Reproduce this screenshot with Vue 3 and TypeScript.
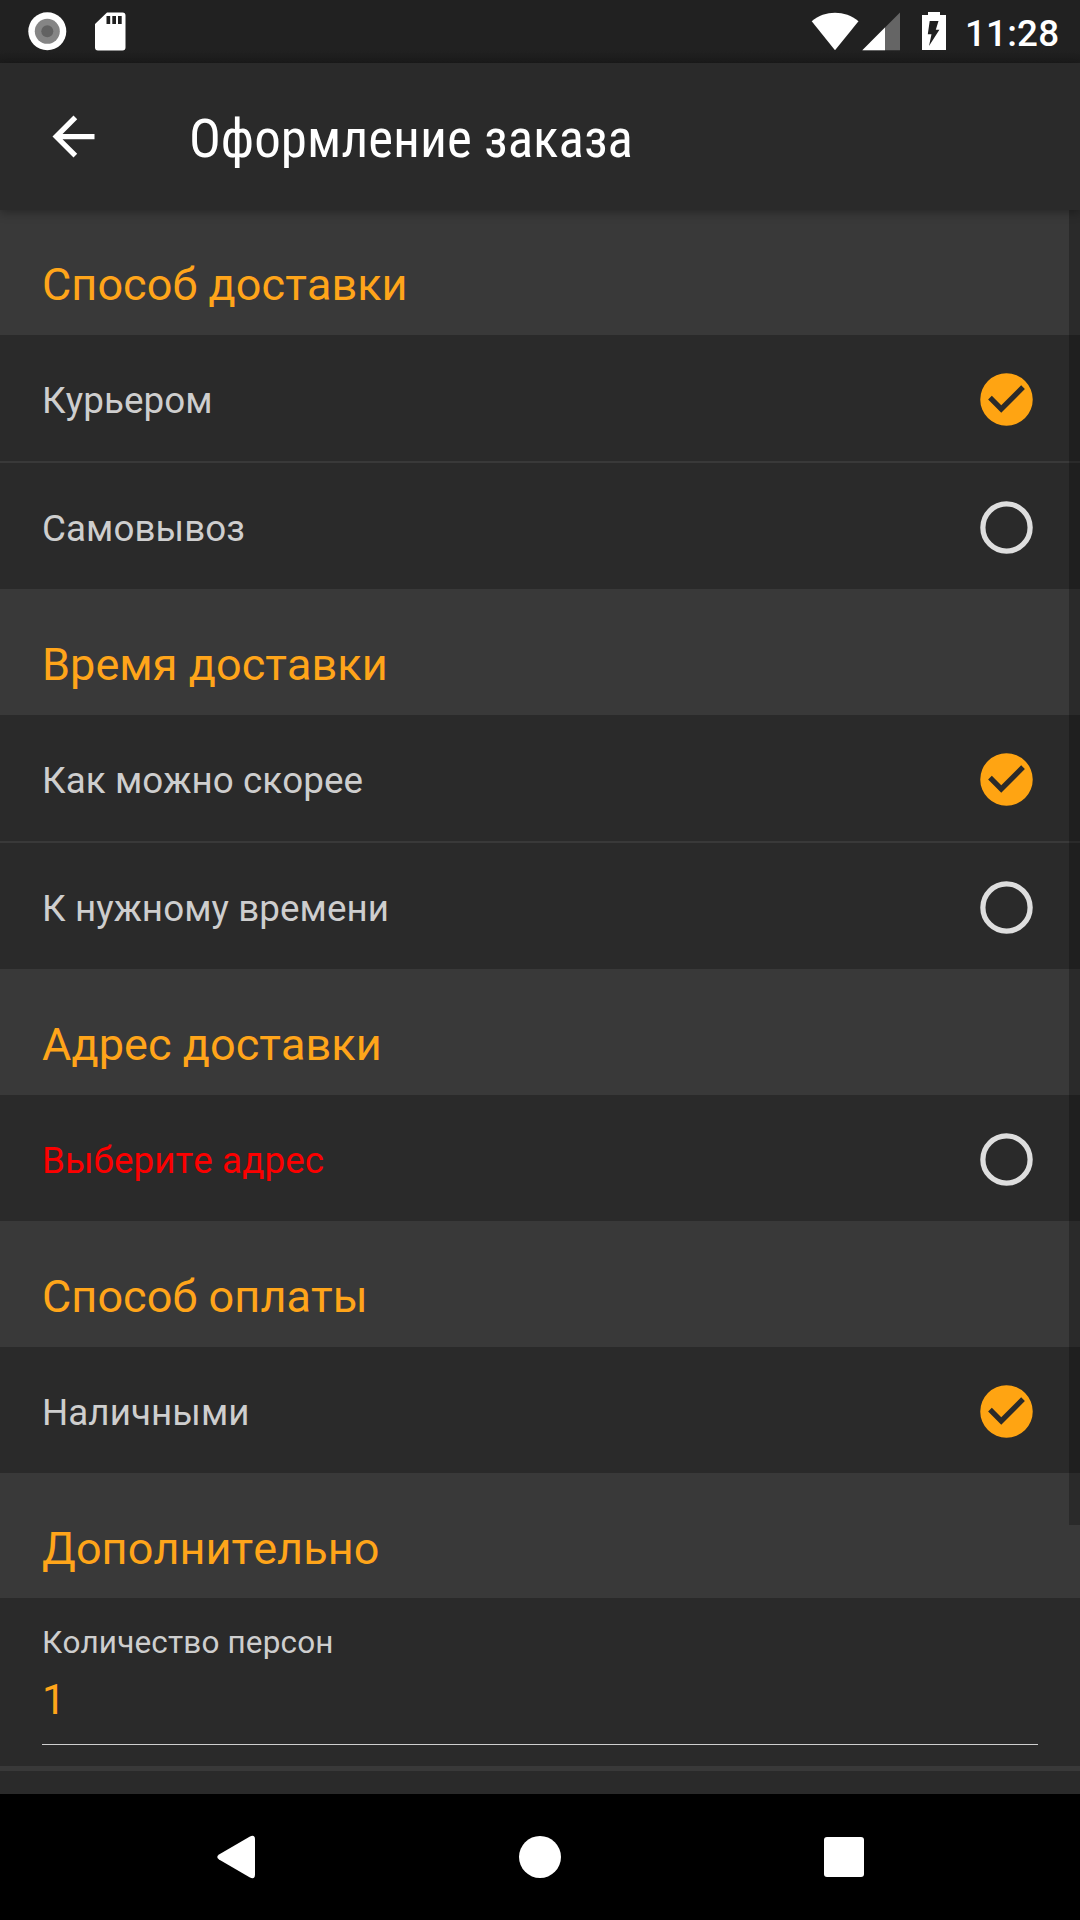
<script setup lang="ts">
interface Option {
  label: string
  checked: boolean
  error?: boolean
}

interface Section {
  title: string
  options: Option[]
}

const sections: Section[] = [
  {
    title: 'Способ доставки',
    options: [
      { label: 'Курьером', checked: true },
      { label: 'Самовывоз', checked: false },
    ],
  },
  {
    title: 'Время доставки',
    options: [
      { label: 'Как можно скорее', checked: true },
      { label: 'К нужному времени', checked: false },
    ],
  },
  {
    title: 'Адрес доставки',
    options: [{ label: 'Выберите адрес', checked: false, error: true }],
  },
  {
    title: 'Способ оплаты',
    options: [{ label: 'Наличными', checked: true }],
  },
]
</script>

<template>
  <div class="screen">
    <div class="status">
      <svg class="status-left" width="140" height="63" viewBox="0 0 140 63">
        <circle cx="47.3" cy="31.3" r="19" fill="#fff" />
        <circle cx="47.3" cy="31.3" r="12.5" fill="#858585" />
        <circle cx="47.3" cy="31.3" r="6" fill="#626262" />
        <path d="M107 12.5h15.5a3 3 0 0 1 3 3v32a3 3 0 0 1-3 3h-24.500a3 3 0 0 1-3-3V24z" fill="#fff" />
        <path d="M106.500 16h3.700v8h-3.700zM112.300 16h3.700v8h-3.700zM118 16h3.700v8H118z" fill="#202020" />
      </svg>
      <svg class="status-right" width="150" height="63" viewBox="805 0 150 63">
        <path d="M811.700 21.300C825 10 845 10 858.500 21.300L835 50.300z" fill="#fff" />
        <path d="M900 12.500V50.200H862.300z" fill="#656565" />
        <path d="M885 27.500V50.200H862.300z" fill="#fff" />
        <path d="M928 12h12v3h6v35h-24V15h6z" fill="#fff" />
        <path d="M929.700 21h8.800l-2.700 8.700h3.600L929 46l2.500-11.700h-3.700z" fill="#202020" />
      </svg>
      <span class="clock">11:28</span>
    </div>

    <header class="toolbar">
      <svg class="back" width="63" height="63" viewBox="0 0 24 24">
        <path d="M20 11H7.830l5.590-5.590L12 4l-8 8 8 8 1.410-1.410L7.830 13H20z" fill="#fff" />
      </svg>
      <h1 class="title">Оформление заказа</h1>
    </header>

    <main class="content">
      <section v-for="section in sections" :key="section.title">
        <h2 class="heading">{{ section.title }}</h2>
        <div v-for="option in section.options" :key="option.label" class="row">
          <span class="label" :class="{ error: option.error }">{{ option.label }}</span>
          <svg width="63" height="63" viewBox="0 0 24 24">
            <path
              v-if="option.checked"
              d="M12 2a10 10 0 1 0 0 20 10 10 0 0 0 0-20zM10 17l-5-5 1.410-1.410L10 14.170l7.590-7.590L19 8z"
              fill="#ffa412"
              fill-rule="evenodd"
            />
            <circle v-else cx="12" cy="12" r="9" fill="none" stroke="#dedede" stroke-width="2" />
          </svg>
        </div>
      </section>
      <section>
        <h2 class="heading last">Дополнительно</h2>
        <div class="field">
          <div class="field-label">Количество персон</div>
          <div class="field-value">1</div>
        </div>
      </section>
      <div class="scrollbar"></div>
    </main>

    <nav class="navbar">
      <svg width="1080" height="126" viewBox="0 0 1080 126">
        <path d="M219 60.500L249.500 42.800Q255 40 255 45.500V80.500Q255 86 249.500 83.200L219 65.500Q215.500 63 219 60.500z" fill="#fff" />
        <circle cx="540" cy="63" r="21" fill="#fff" />
        <rect x="824" y="43" width="40" height="40" rx="3" fill="#fff" />
      </svg>
    </nav>
  </div>
</template>

<style>
body {
  margin: 0;
  background: #2a2a2a;
}
</style>

<style scoped>
.screen {
  width: 1080px;
  height: 1920px;
  display: flex;
  flex-direction: column;
  overflow: hidden;
  background: #2a2a2a;
  font-family: Roboto, sans-serif;
  font-kerning: none;
}
.status {
  flex: none;
  height: 63px;
  display: flex;
  background: linear-gradient(#212121 50px, #1c1c1c);
}
.status svg {
  flex: none;
}
.status-right {
  margin-left: 665px;
}
.clock {
  margin-left: 10px;
  padding-top: 4px;
  font-size: 36.75px;
  line-height: 59px;
  font-weight: 500;
  letter-spacing: 0.2px;
  color: #fff;
}
.toolbar {
  flex: none;
  height: 147px;
  display: flex;
  align-items: center;
  box-sizing: border-box;
  padding-left: 42px;
  background: #2a2a2a;
  position: relative;
  z-index: 1;
  box-shadow: 0 2px 10px rgba(0, 0, 0, 0.35);
}
.title {
  margin: 5px 0 0 84px;
  font-family: "Roboto Condensed", Roboto, sans-serif;
  font-stretch: 75%;
  font-size: 53px;
  line-height: 62px;
  font-weight: 400;
  white-space: nowrap;
  color: #fff;
}
.content {
  flex: none;
  height: 1584px;
  overflow: hidden;
  position: relative;
}
.heading {
  margin: 0;
  height: 126px;
  box-sizing: border-box;
  padding: 25px 0 0 42px;
  font-size: 45px;
  line-height: 102px;
  font-weight: 400;
  letter-spacing: 0.06px;
  color: #ffa51a;
  background: #393939;
}
section:first-child .heading {
  height: 125px;
  padding-top: 24px;
}
.heading.last {
  height: 125px;
}
.row {
  height: 126px;
  box-sizing: border-box;
  padding: 2px 42px 0;
  display: flex;
  align-items: center;
  justify-content: space-between;
  background: #2a2a2a;
}
.row + .row {
  height: 128px;
  border-top: 2px solid #393939;
}
.label {
  padding-top: 3px;
  font-size: 36.75px;
  line-height: 44px;
  letter-spacing: 0.08px;
  color: #cecece;
}
.label.error {
  color: #fc0000;
}
.field {
  height: 173px;
  box-sizing: border-box;
  padding: 26px 42px 0;
  border-bottom: 5px solid #393939;
}
.field-label {
  font-size: 31.5px;
  line-height: 38px;
  letter-spacing: 0.15px;
  color: #cecece;
}
.field-value {
  height: 83px;
  box-sizing: border-box;
  border-bottom: 1px solid #cfcfcf;
  font-size: 42px;
  line-height: 76px;
  color: #ffa51a;
}
.scrollbar {
  position: absolute;
  top: 0;
  right: 0;
  width: 11px;
  height: 1315px;
  background: rgba(0, 0, 0, 0.26);
}
.navbar {
  flex: none;
  height: 126px;
  background: #000;
}
.navbar svg {
  display: block;
}
</style>
